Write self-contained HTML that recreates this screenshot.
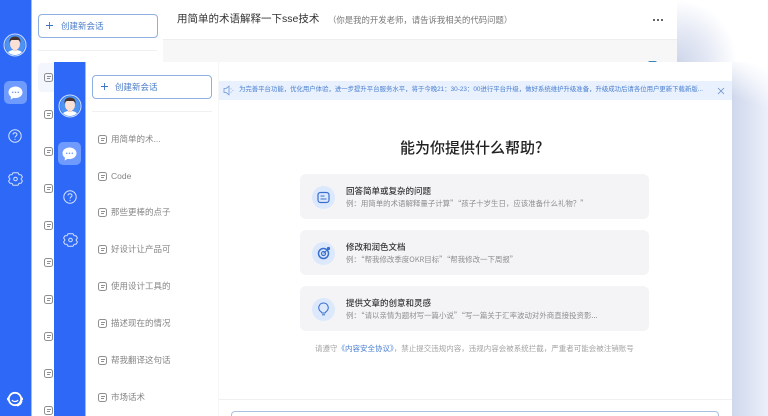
<!DOCTYPE html>
<html lang="zh-CN"><head><meta charset="utf-8"><style>
html,body{margin:0;padding:0;background:#fff}
body{width:768px;height:416px;overflow:hidden;position:relative}
#w{position:absolute;left:0;top:0;width:768px;height:416px;overflow:hidden;background:#fff;font-family:"Liberation Sans","Noto Sans CJK SC",sans-serif;filter:blur(.3px)}
.a{position:absolute}
.t{position:absolute;white-space:nowrap;line-height:1}
.blue{background:#2d69f6}
.btn{position:absolute;width:118px;height:22px;border:1px solid #8fb0e0;border-radius:4px;background:#fff}
.btn span{position:absolute;left:22px;top:6px;font-size:8.5px;line-height:10px;color:#4a7cc8;white-space:nowrap}
.ic{position:absolute;border:1px solid #8f8f8f;border-radius:2.5px;box-sizing:border-box;width:9px;height:8.500px}
.ic:before,.ic:after{content:"";position:absolute;left:1.500px;height:1px;background:#8f8f8f}
.ic:before{top:1.500px;width:4px}.ic:after{top:3.700px;width:3px}
.li{position:absolute;left:111px;font-size:8.500px;line-height:10px;color:#858585;white-space:nowrap}
.card{position:absolute;left:300px;width:349px;height:45px;background:#f4f4f7;border-radius:6px}
.circ{position:absolute;left:12px;top:11.500px;width:23px;height:23px;border-radius:50%;background:#dce8fb}
.ct{position:absolute;left:46px;top:11.500px;font-size:8.500px;line-height:10px;color:#333;font-weight:500;font-family:"Noto Sans CJK SC",sans-serif;white-space:nowrap}
.cs{position:absolute;left:46px;top:24.500px;font-size:7.450px;line-height:10px;color:#8e8e8e;font-family:"Noto Sans CJK SC",sans-serif;white-space:nowrap}
svg{position:absolute;display:block}
</style></head><body><div id="w">

<!-- background glow -->
<div class="a" style="left:677px;top:0;width:60px;height:62px;background:radial-gradient(ellipse 60px 62px at 0 100%,#cdd6ea 0,#e4e8f4 50%,#fff 100%)"></div>
<div class="a" style="left:732px;top:62px;width:36px;height:354px;background:linear-gradient(90deg,#cfd8ec,#eceffa 100%)"></div>
<div class="a" style="left:732px;top:62px;width:36px;height:50px;background:linear-gradient(200deg,#fff 10%,rgba(255,255,255,0) 75%)"></div>

<!-- back window -->
<div class="a blue" style="left:0;top:0;width:31px;height:416px"></div>
<div class="a" style="left:31px;top:0;width:1px;height:416px;background:#9dbcf5"></div>
<div class="btn" style="left:38px;top:14px"><svg style="left:7px;top:7px" width="7" height="7" viewBox="0 0 7 7"><path d="M3.500 0v7M0 3.500h7" stroke="#3b73c8" stroke-width=".9"/></svg><span>创建新会话</span></div>
<div class="a" style="left:38px;top:50px;width:119px;height:1px;background:#f0f0f0"></div>
<div class="a" style="left:38px;top:63px;width:20px;height:29px;background:#f3f7fd;border-radius:4px"></div>
<div class="ic" style="left:44px;top:73px"></div><div class="ic" style="left:44px;top:110px"></div><div class="ic" style="left:44px;top:147px"></div><div class="ic" style="left:44px;top:184px"></div><div class="ic" style="left:44px;top:221px"></div><div class="ic" style="left:44px;top:258px"></div><div class="ic" style="left:44px;top:295px"></div><div class="ic" style="left:44px;top:332px"></div><div class="ic" style="left:44px;top:369px"></div><div class="ic" style="left:44px;top:406px"></div>
<div class="a" style="left:163px;top:0;width:514px;height:39px;background:#fff"></div>
<div class="a" style="left:163px;top:39px;width:514px;height:23px;background:#f7f7f7;border-top:1px solid #eeeeee;box-sizing:border-box"></div>
<div class="t" style="left:177px;top:14px;font-size:10.500px;color:#333">用简单的术语解释一下sse技术</div>
<div class="t" style="left:328px;top:16px;font-size:8.400px;color:#777;font-family:'Noto Sans CJK SC',sans-serif">&#65288;你是我的开发老师&#65292;请告诉我相关的代码问题&#65289;</div>
<div class="a" style="left:653px;top:19px;width:2.400px;height:2.400px;border-radius:50%;background:#333"></div>
<div class="a" style="left:657px;top:19px;width:2.400px;height:2.400px;border-radius:50%;background:#333"></div>
<div class="a" style="left:661px;top:19px;width:2.400px;height:2.400px;border-radius:50%;background:#333"></div>
<div class="a" style="left:648px;top:60.500px;width:9px;height:2px;border-radius:5px 5px 0 0;background:#3a86b8"></div>

<!-- back sidebar icons -->
<svg style="left:3px;top:33px" width="24" height="24" viewBox="0 0 24 24"><defs><clipPath id="c1"><circle cx="12" cy="12" r="10"/></clipPath></defs><circle cx="12" cy="12" r="11" fill="#2d69f6" stroke="#cfe2ff" stroke-width="1"/><g clip-path="url(#c1)"><circle cx="12" cy="12" r="10" fill="#4f93f2"/><path d="M3 24c1-6 5-7 9-7s8 1 9 7z" fill="#fff"/><rect x="10" y="14" width="4" height="4" fill="#f4d5c6"/><ellipse cx="12" cy="11" rx="5" ry="6" fill="#fbe1d5"/><path d="M6.500 10C6 5 9 3.500 12 3.500S18 5 17.500 10c-.5-2-1.500-3-2.500-3H9c-1 0-2 1-2.500 3z" fill="#43322e"/></g></svg>
<div class="a" style="left:4px;top:81px;width:23px;height:23px;border-radius:5px;background:#6f9bff"></div>
<svg style="left:8px;top:85.500px" width="15" height="14" viewBox="0 0 15 14"><path d="M7.500 0.500C3.500 0.500.5 3 .5 6.300c0 1.900 1 3.500 2.500 4.600L2.600 13.500l3-1.600c.6.100 1.200.2 1.900.2 4 0 7-2.600 7-5.800S11.500.5 7.500.5z" fill="#fff"/><circle cx="4.700" cy="6.300" r=".8" fill="#6f9bff"/><circle cx="7.500" cy="6.300" r=".8" fill="#6f9bff"/><circle cx="10.300" cy="6.300" r=".8" fill="#6f9bff"/></svg>
<svg style="left:8px;top:129px" width="14" height="14" viewBox="0 0 14 14"><circle cx="7" cy="7" r="6.200" fill="none" stroke="#d5e3ff" stroke-width="1"/><path d="M5 5.500C5 4.300 6 3.700 7 3.700s2 .7 2 1.800c0 1.500-2 1.500-2 3" fill="none" stroke="#d5e3ff" stroke-width="1"/><circle cx="7" cy="10.300" r=".6" fill="#d5e3ff"/></svg>
<svg style="left:8px;top:172px" width="15" height="14" viewBox="0 0 15 14"><path d="M5 .8h5l1 1.800 2.200.3 1.200 2.100L13 7l1.400 2-1.200 2.100-2.200.3-1 1.800H5l-1-1.800-2.200-.3L.6 9 2 7 .6 5l1.200-2.100L4 2.600z" fill="none" stroke="#d5e3ff" stroke-width="1" stroke-linejoin="round"/><circle cx="7.500" cy="7" r="1.800" fill="none" stroke="#d5e3ff" stroke-width="1"/></svg>
<svg style="left:6px;top:390px" width="18" height="18" viewBox="0 0 18 18"><circle cx="9" cy="9" r="6.200" fill="#2d69f6" stroke="#fff" stroke-width="1.800"/><path d="M2 9.500V8.500M16 9.500V8.500" stroke="#fff" stroke-width="2" stroke-linecap="round"/><path d="M6 10c1 2 5 2 6 0" stroke="#fff" stroke-width="1.200" fill="none"/><path d="M16 11c-.5 3-3 4.500-5 5" stroke="#fff" stroke-width="1" fill="none"/></svg>

<!-- front window -->
<div class="a" style="left:54px;top:62px;width:678px;height:354px;background:#fff"></div>
<div class="a blue" style="left:54px;top:62px;width:31px;height:354px"></div>
<div class="a" style="left:85px;top:62px;width:1px;height:354px;background:#9dbcf5"></div>
<div class="a" style="left:218px;top:62px;width:1px;height:354px;background:#f6f6f6"></div>

<div class="btn" style="left:92px;top:75px"><svg style="left:8px;top:7px" width="7" height="7" viewBox="0 0 7 7"><path d="M3.500 0v7M0 3.500h7" stroke="#3b73c8" stroke-width=".9"/></svg><span>创建新会话</span></div>
<div class="a" style="left:92px;top:111px;width:120px;height:1px;background:#f0f0f0"></div>

<div class="ic" style="left:98px;top:135px"></div><div class="li" style="top:134px">用简单的术...</div>
<div class="ic" style="left:98px;top:172px"></div><div class="li" style="top:171px">Code</div>
<div class="ic" style="left:98px;top:208px"></div><div class="li" style="top:207px">那些更棒的点子</div>
<div class="ic" style="left:98px;top:245px"></div><div class="li" style="top:244px">好设计让产品可</div>
<div class="ic" style="left:98px;top:282px"></div><div class="li" style="top:281px">使用设计工具的</div>
<div class="ic" style="left:98px;top:319px"></div><div class="li" style="top:318px">描述现在的情况</div>
<div class="ic" style="left:98px;top:356px"></div><div class="li" style="top:355px">帮我翻译这句话</div>
<div class="ic" style="left:98px;top:393px"></div><div class="li" style="top:392px">市场话术</div>

<!-- front sidebar icons -->
<svg style="left:57.500px;top:93.500px" width="24" height="24" viewBox="0 0 24 24"><defs><clipPath id="c2"><circle cx="12" cy="12" r="10"/></clipPath></defs><circle cx="12" cy="12" r="11" fill="#2d69f6" stroke="#cfe2ff" stroke-width="1"/><g clip-path="url(#c2)"><circle cx="12" cy="12" r="10" fill="#4f93f2"/><path d="M3 24c1-6 5-7 9-7s8 1 9 7z" fill="#fff"/><rect x="10" y="14" width="4" height="4" fill="#f4d5c6"/><ellipse cx="12" cy="11" rx="5" ry="6" fill="#fbe1d5"/><path d="M6.500 10C6 5 9 3.500 12 3.500S18 5 17.500 10c-.5-2-1.500-3-2.500-3H9c-1 0-2 1-2.500 3z" fill="#43322e"/></g></svg>
<div class="a" style="left:58px;top:142px;width:23px;height:23px;border-radius:5px;background:#6f9bff"></div>
<svg style="left:62px;top:146.500px" width="15" height="14" viewBox="0 0 15 14"><path d="M7.500 0.500C3.500 0.500.5 3 .5 6.300c0 1.900 1 3.500 2.500 4.600L2.600 13.500l3-1.600c.6.100 1.200.2 1.900.2 4 0 7-2.600 7-5.800S11.500.5 7.500.5z" fill="#fff"/><circle cx="4.700" cy="6.300" r=".8" fill="#6f9bff"/><circle cx="7.500" cy="6.300" r=".8" fill="#6f9bff"/><circle cx="10.300" cy="6.300" r=".8" fill="#6f9bff"/></svg>
<svg style="left:62.500px;top:190px" width="14" height="14" viewBox="0 0 14 14"><circle cx="7" cy="7" r="6.200" fill="none" stroke="#d5e3ff" stroke-width="1"/><path d="M5 5.500C5 4.300 6 3.700 7 3.700s2 .7 2 1.800c0 1.500-2 1.500-2 3" fill="none" stroke="#d5e3ff" stroke-width="1"/><circle cx="7" cy="10.300" r=".6" fill="#d5e3ff"/></svg>
<svg style="left:62.500px;top:233px" width="15" height="14" viewBox="0 0 15 14"><path d="M5 .8h5l1 1.800 2.200.3 1.200 2.100L13 7l1.400 2-1.200 2.100-2.200.3-1 1.800H5l-1-1.800-2.200-.3L.6 9 2 7 .6 5l1.200-2.100L4 2.600z" fill="none" stroke="#d5e3ff" stroke-width="1" stroke-linejoin="round"/><circle cx="7.500" cy="7" r="1.800" fill="none" stroke="#d5e3ff" stroke-width="1"/></svg>

<!-- notice -->
<div class="a" style="left:219px;top:81px;width:513px;height:19px;background:#e8f1fd"></div>
<svg style="left:223px;top:85px" width="11" height="11" viewBox="0 0 11 11"><path d="M1 3.500h2L6 1.200v8.600L3 7.500H1z" fill="none" stroke="#6f96d8" stroke-width=".8"/><path d="M8 3.500v.8M8 6.700v.8M9.500 5.500h.8" stroke="#6f96d8" stroke-width=".8"/></svg>
<div class="t" style="left:239px;top:87px;font-size:6.400px;color:#4a7fd0">为完善平台功能&#65292;优化用户体验&#65292;进一步提升平台服务水平&#65292;将于今晚21&#65306;30-23&#65306;00进行平台升级&#65292;做好系统维护升级准备&#65292;升级成功后请各位用户更新下载新版...</div>
<svg style="left:717px;top:87px" width="8" height="8" viewBox="0 0 8 8"><path d="M1 1l6 6M7 1L1 7" stroke="#6c8fc4" stroke-width=".8"/></svg>

<!-- main -->
<div class="t" style="left:400px;top:140px;font-size:15px;color:#222;font-weight:500;font-family:'Noto Sans CJK SC',sans-serif">能为你提供什么帮助?</div>

<div class="card" style="top:174px"><div class="circ"></div>
<svg style="left:17px;top:16.500px" width="13" height="13" viewBox="0 0 13 13"><rect x="1" y="1.500" width="11" height="10" rx="2.500" fill="none" stroke="#3a6fd0" stroke-width="1.200"/><path d="M3.500 5h4M3.500 8h6" stroke="#3a6fd0" stroke-width="1"/></svg>
<div class="ct">回答简单或复杂的问题</div><div class="cs">例&#65306;用简单的术语解释量子计算”“孩子十岁生日&#65292;应该准备什么礼物&#65311;”</div></div>

<div class="card" style="top:230px"><div class="circ"></div>
<svg style="left:17px;top:16px" width="14" height="14" viewBox="0 0 14 14"><circle cx="6.500" cy="7.500" r="5" fill="none" stroke="#3a6fd0" stroke-width="1.500"/><circle cx="6.500" cy="7.500" r="2" fill="none" stroke="#3a6fd0" stroke-width="1.200"/><path d="M6.500 7.500l5-5" stroke="#3a6fd0" stroke-width="1"/><circle cx="11.500" cy="2.500" r="1.600" fill="#3a6fd0"/></svg>
<div class="ct">修改和润色文档</div><div class="cs">例&#65306;“帮我修改季度OKR目标”“帮我修改一下周报”</div></div>

<div class="card" style="top:286px"><div class="circ"></div>
<svg style="left:17px;top:16px" width="13" height="14" viewBox="0 0 13 14"><path d="M6.500 1a4.700 4.700 0 0 0-2.500 8.700L5 11h3l1-1.300A4.700 4.700 0 0 0 6.500 1z" fill="none" stroke="#3a6fd0" stroke-width="1.100"/><path d="M5 12.800h3" stroke="#3a6fd0" stroke-width="1"/></svg>
<div class="ct">提供文章的创意和灵感</div><div class="cs">例&#65306;“请以亲情为题材写一篇小说”“写一篇关于汇率波动对外商直接投资影...</div></div>

<div class="t" style="left:315px;top:345px;font-size:7.500px;color:#a3a3a3">请遵守<span style="color:#4a7fd0">《内容安全协议》</span>&#65292;禁止提交违规内容&#65292;违规内容会被系统拦截&#65292;严重者可能会被注销账号</div>

<div class="a" style="left:219px;top:399px;width:513px;height:1px;background:#f0f0f0"></div>
<div class="a" style="left:231px;top:411px;width:488px;height:5px;border:1.500px solid #a9c0e4;border-bottom:0;border-radius:4px 4px 0 0;box-sizing:border-box"></div>
</div></body></html>
